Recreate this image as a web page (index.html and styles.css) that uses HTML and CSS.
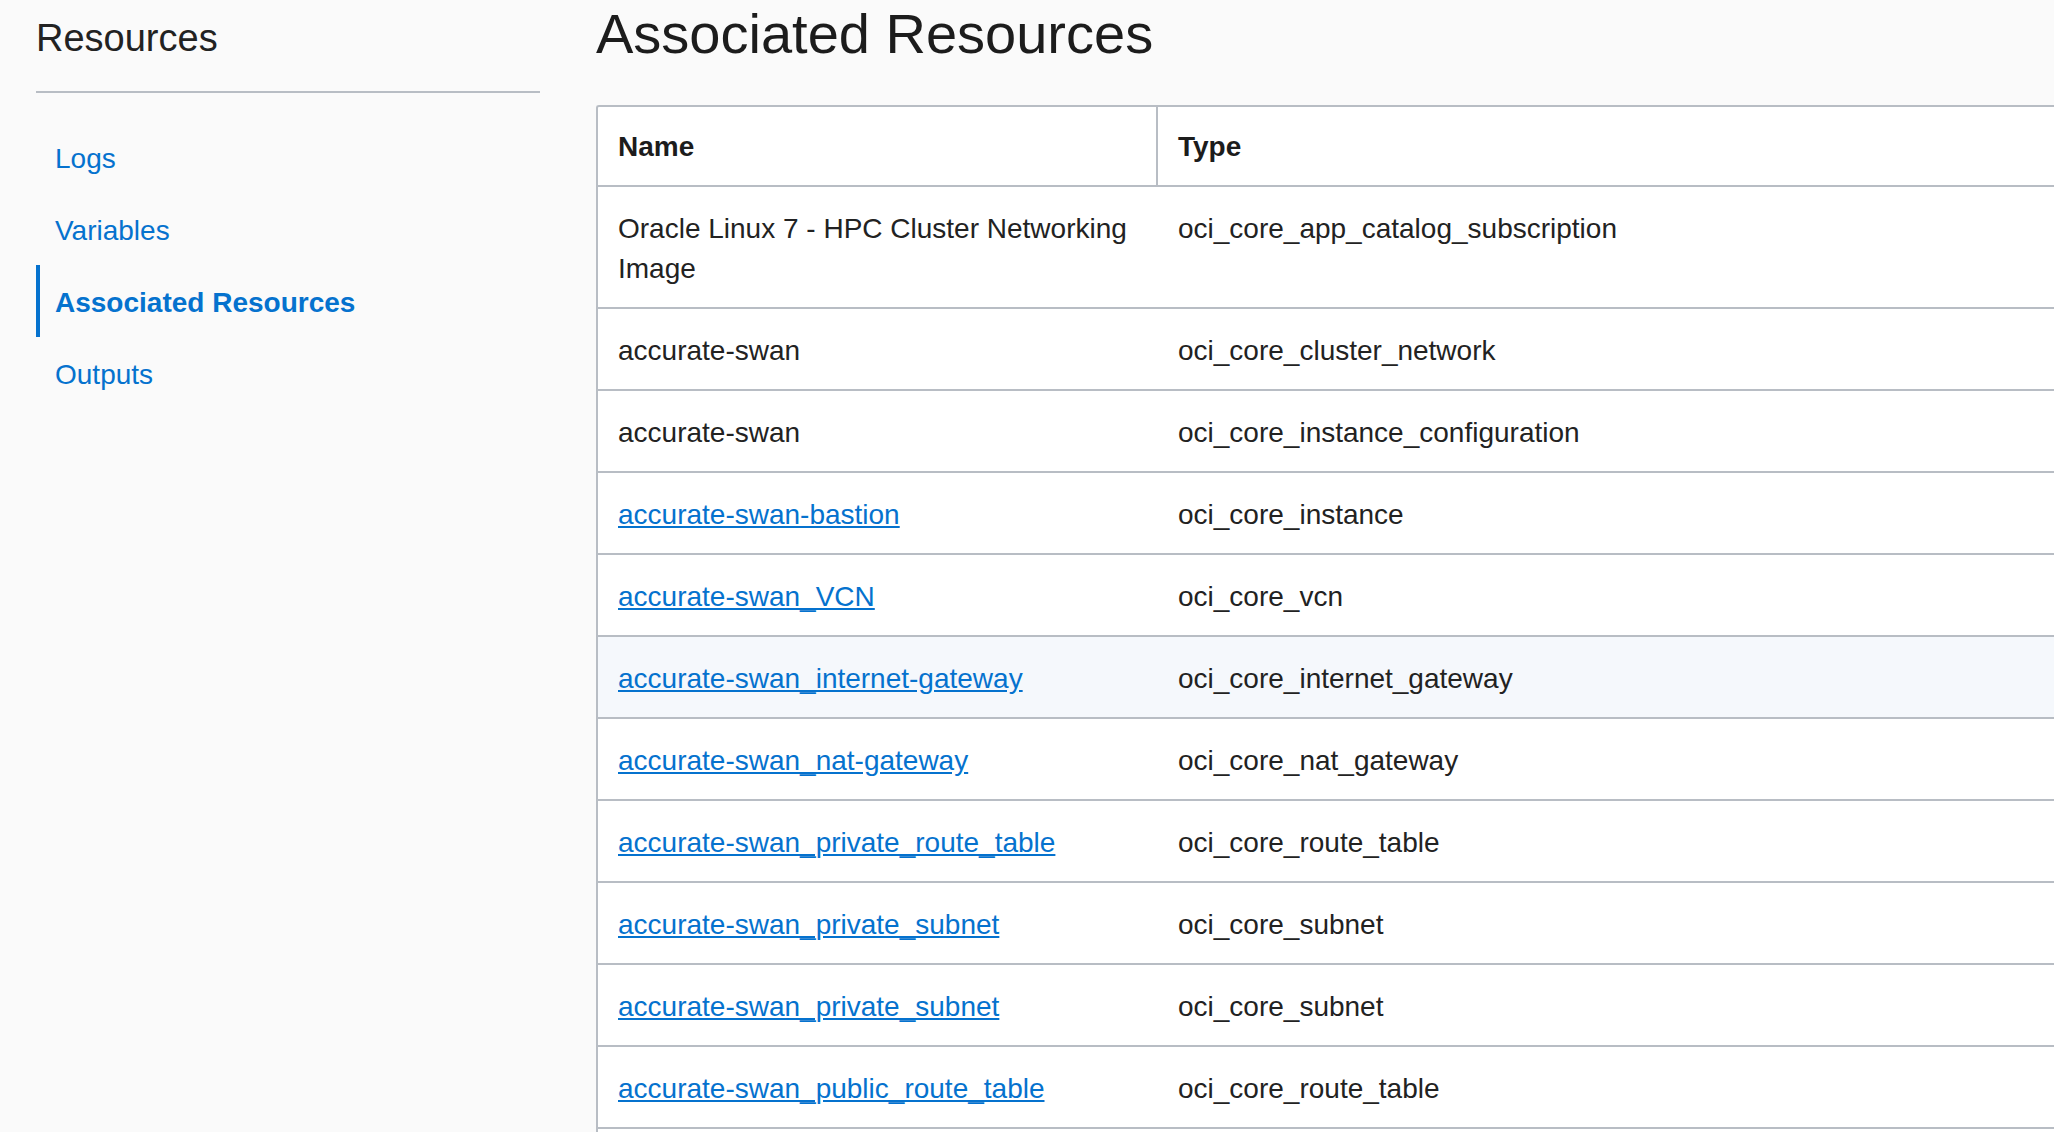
FILE: index.html
```html
<!DOCTYPE html>
<html lang="en">
<head>
<meta charset="utf-8">
<title>Associated Resources</title>
<link rel="stylesheet" href="styles.css">
</head>
<body>
<div class="page">
  <aside class="sidebar">
    <h2 class="side-title">Resources</h2>
    <hr class="side-rule">
    <nav class="side-nav">
      <a class="nav-item" href="#">Logs</a>
      <a class="nav-item" href="#">Variables</a>
      <a class="nav-item active" href="#">Associated Resources</a>
      <a class="nav-item" href="#">Outputs</a>
    </nav>
  </aside>
  <main class="main">
    <h1 class="heading">Associated Resources</h1>
    <table class="res-table">
      <colgroup><col class="col-name"><col class="col-type"></colgroup>
      <thead>
        <tr><th class="th-name">Name</th><th>Type</th></tr>
      </thead>
      <tbody>
        <tr><td>Oracle Linux 7 - HPC Cluster Networking Image</td><td>oci_core_app_catalog_subscription</td></tr>
        <tr><td>accurate-swan</td><td>oci_core_cluster_network</td></tr>
        <tr><td>accurate-swan</td><td>oci_core_instance_configuration</td></tr>
        <tr><td><a class="link" href="#">accurate-swan-bastion</a></td><td>oci_core_instance</td></tr>
        <tr><td><a class="link" href="#">accurate-swan_VCN</a></td><td>oci_core_vcn</td></tr>
        <tr class="hover"><td><a class="link" href="#">accurate-swan_internet-gateway</a></td><td>oci_core_internet_gateway</td></tr>
        <tr><td><a class="link" href="#">accurate-swan_nat-gateway</a></td><td>oci_core_nat_gateway</td></tr>
        <tr><td><a class="link" href="#">accurate-swan_private_route_table</a></td><td>oci_core_route_table</td></tr>
        <tr><td><a class="link" href="#">accurate-swan_private_subnet</a></td><td>oci_core_subnet</td></tr>
        <tr><td><a class="link" href="#">accurate-swan_private_subnet</a></td><td>oci_core_subnet</td></tr>
        <tr><td><a class="link" href="#">accurate-swan_public_route_table</a></td><td>oci_core_route_table</td></tr>
        <tr class="partial"><td></td><td></td></tr>
      </tbody>
    </table>
  </main>
</div>
</body>
</html>
```
FILE: styles.css
```css
html, body {
  margin: 0;
  padding: 0;
  height: 100%;
  overflow: hidden;
}
body {
  background: #fafafa;
  font-family: "Liberation Sans", Arial, sans-serif;
  color: #1f1f1f;
}
.page {
  display: flex;
  align-items: flex-start;
}
.sidebar {
  width: 504px;
  flex: none;
  padding: 16px 0 0 36px;
}
.side-title {
  margin: 0 0 31px 0;
  font-size: 38px;
  line-height: 44px;
  font-weight: normal;
  color: #222;
}
.side-rule {
  margin: 0;
  border: none;
  height: 2px;
  background: #b8bdc4;
}
.side-nav {
  margin-top: 28px;
  display: flex;
  flex-direction: column;
}
.nav-item {
  display: block;
  height: 72px;
  box-sizing: border-box;
  padding: 3px 0 0 15px;
  line-height: 69px;
  border-left: 4px solid transparent;
  font-size: 28px;
  color: #0572ce;
  text-decoration: none;
}
.nav-item.active {
  border-left-color: #0572ce;
  font-weight: bold;
}
.main {
  flex: 1;
  min-width: 0;
  margin-left: 56px;
  overflow: hidden;
}
.heading {
  margin: 2px 0 39px 0;
  font-size: 56px;
  line-height: 64px;
  font-weight: normal;
  color: #1c1c1c;
}
.res-table {
  width: 1600px;
  table-layout: fixed;
  border-collapse: separate;
  border-spacing: 0;
  background: #fff;
  border-top: 2px solid #b8bdc4;
  border-left: 2px solid #b8bdc4;
  border-top-left-radius: 3px;
  font-size: 28px;
  line-height: 40px;
}
.col-name { width: 560px; }
.res-table th {
  text-align: left;
  font-weight: bold;
  padding: 20px 20px 18px;
  border-bottom: 2px solid #b8bdc4;
  color: #1c1c1c;
}
.res-table th.th-name {
  border-right: 2px solid #b8bdc4;
}
.res-table td {
  padding: 22px 20px 18px;
  vertical-align: top;
  border-bottom: 2px solid #b8bdc4;
  color: #222;
}
.res-table tr.partial td {
  height: 40px;
}
.res-table tr.hover td {
  background: #f5f8fc;
}
.link {
  color: #0572ce;
  text-decoration: underline;
  text-underline-offset: 2px;
}
```
